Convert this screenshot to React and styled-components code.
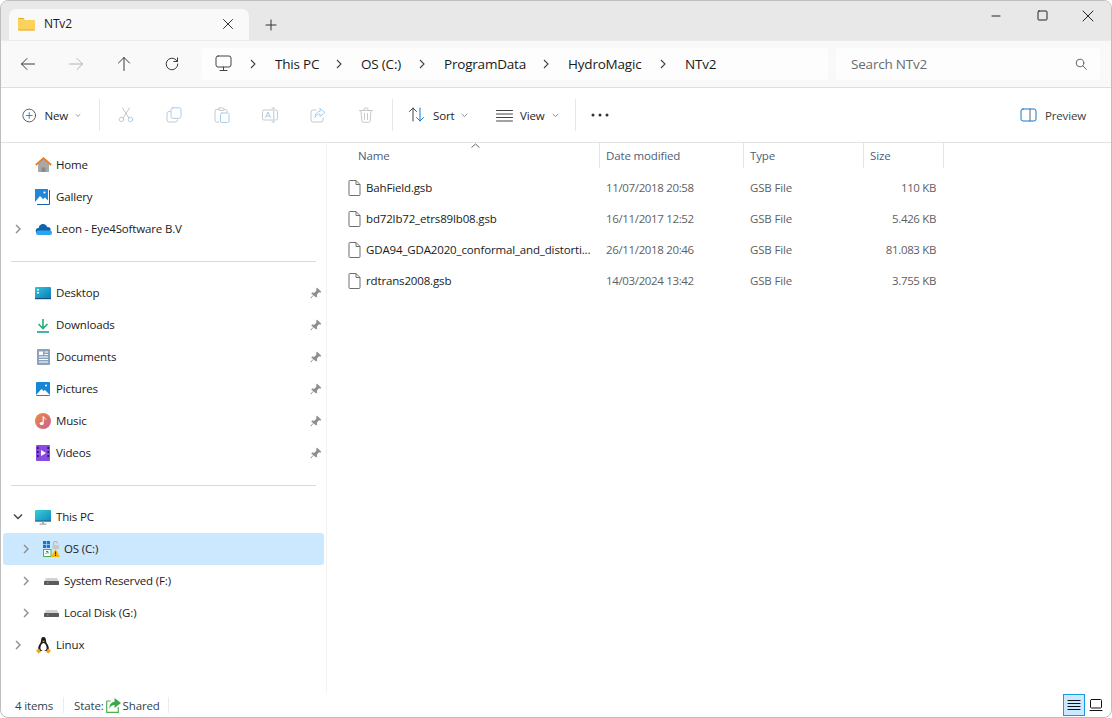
import React from "react";
import styled, { createGlobalStyle } from "styled-components";

const Global = createGlobalStyle`
  html, body { margin: 0; padding: 0; background: #fff; }
  body { font-family: "Open Sans", "Liberation Sans", sans-serif; font-size: 11.5px; color: #1a1a1a; letter-spacing: -0.15px; }
  * { box-sizing: border-box; }
  #root { width: 1112px; height: 718px; }
`;

const Window = styled.div`
  width: 1112px; height: 718px; display: flex; flex-direction: column;
  border: 1px solid #bdbdbd; border-radius: 8px; overflow: hidden; background: #fff;
`;
const TitleBar = styled.div`
  height: 39px; flex: none; background: #e8e8e8; display: flex; align-items: flex-end; padding-left: 8px;
`;
const Tab = styled.div`
  width: 240px; height: 31px; background: #f9f9f9; border-radius: 7px 7px 0 0;
  display: flex; align-items: center; padding: 0 15px 2px 9px; gap: 9px;
`;
const TabTitle = styled.span`flex: 1; font-size: 12px; font-weight: 500;`;
const NewTab = styled.div`width: 44px; height: 31px; display: flex; align-items: center; justify-content: center;`;
const Spacer = styled.div`flex: 1;`;
const WinControls = styled.div`display: flex; align-self: stretch; align-items: flex-start;`;
const WinBtn = styled.div`width: 46px; height: 29px; display: flex; align-items: center; justify-content: center;`;

const AddressRow = styled.div`
  height: 48px; flex: none; background: #f9f9f9; border-bottom: 1px solid #dedede; border-top: 1px solid #ececec;
  display: flex; align-items: center; padding-left: 3px; padding-right: 11px;
`;
const NavBtn = styled.div`width: 48px; height: 32px; display: flex; align-items: center; justify-content: center;`;
const Crumbs = styled.div`
  margin-left: 6px; width: 626px; height: 32px; background: #fdfdfd; border-radius: 4px; padding-bottom: 1px;
  display: flex; align-items: center; padding-left: 13px; font-size: 13.5px; letter-spacing: -0.2px;
`;
const CrumbIcon = styled.div`width: 34px; display: flex; align-items: center;`;
const CrumbChevron = styled.div`width: 26px; display: flex; align-items: center;`;
const CrumbText = styled.div`width: ${p => p.$w}px; white-space: nowrap;`;
const Search = styled.div`
  margin-left: 8px; width: 264px; height: 32px; background: #fdfdfd; border-radius: 4px; padding-bottom: 1px;
  display: flex; align-items: center; padding-left: 15px; padding-right: 13px; font-size: 13.5px; color: #6b6b6b;
  justify-content: space-between; letter-spacing: -0.2px;
`;

const CommandBar = styled.div`
  height: 55px; flex: none; background: #fff; border-bottom: 1px solid #e3e3e3;
  display: flex; align-items: center; padding-left: 4px; padding-right: 25px;
`;
const CmdBtn = styled.div`
  display: flex; align-items: center; height: 32px; width: ${p => p.$w}px; padding-left: ${p => p.$pl || 0}px;
`;
const CmdIconBtn = styled.div`width: 48px; height: 32px; display: flex; align-items: center; justify-content: center;`;
const CmdLabel = styled.span`margin-left: ${p => p.$ml}px; color: #262626;`;
const CmdSep = styled.div`width: 1px; height: 32px; background: #e6e6e6; flex: none; margin: 0 ${p => p.$r || 0}px 0 ${p => p.$l || 0}px;`;
const Caret = styled.svg`margin-left: ${p => p.$ml}px;`;
const PreviewBtn = styled.div`display: flex; align-items: center; gap: 8px; color: #404040; margin-left: auto;`;

const Main = styled.div`flex: 1; display: flex; min-height: 0;`;
const Sidebar = styled.div`
  width: 326px; flex: none; padding: 6px 2px 0 2px; border-right: 1px solid #f2f2f2;
`;
const NavRow = styled.div`
  height: 32px; display: flex; align-items: center; border-radius: 3px; width: 321px;
  background: ${p => (p.$selected ? "#cce8ff" : "transparent")};
  padding-left: ${p => 8 + (p.$indent ? 8 : 0)}px;
`;
const Expander = styled.div`width: 14px; display: flex; justify-content: center; flex: none;`;
const NavIcon = styled.div`width: 18px; height: 18px; margin-left: 9px; display: flex; align-items: center; justify-content: center; flex: none;`;
const NavText = styled.span`margin-left: 4px; flex: 1; white-space: nowrap; padding-bottom: 1px;`;
const Pin = styled.div`width: 12px; margin-right: 2px; display: flex; margin-left: auto;`;
const DividerRow = styled.div`height: 32px; display: flex; align-items: center; padding-left: 8px;`;
const DividerLine = styled.div`width: 305px; height: 1px; background: #d9d9d9;`;

const Content = styled.div`flex: 1; min-width: 0; display: flex; flex-direction: column;`;
const HeaderRow = styled.div`
  height: 25px; display: grid; grid-template-columns: 273px 144px 120px 80px; position: relative;
  margin-bottom: 4px;
`;
const HeaderCell = styled.div`
  border-right: 1px solid #e5e5e5; padding-left: ${p => p.$pl || 6}px; color: #4c607a; display: flex; align-items: center;
`;
const SortCaret = styled.svg`position: absolute; left: 144px; top: 0;`;
const FileRow = styled.div`
  height: 31px; display: grid; grid-template-columns: 273px 144px 120px 72px; align-items: center; color: #5f5f5f;
`;
const NameCell = styled.div`display: flex; align-items: center; padding-left: 21px; gap: 5px; color: #1a1a1a; white-space: nowrap;`;
const Cell = styled.div`padding-left: 6px; white-space: nowrap; letter-spacing: ${p => (p.$tight ? "-0.35px" : "inherit")};`;
const SizeCell = styled.div`text-align: right; white-space: nowrap; letter-spacing: -0.35px;`;

const StatusBar = styled.div`
  height: 24px; flex: none; display: flex; align-items: center; padding-left: 14px; padding-right: 4px; color: #333f4d;
`;
const StatusSep = styled.div`width: 1px; height: 16px; background: #ececec; margin: 0 ${p => p.$r}px 0 ${p => p.$l}px;`;
const StateIcon = styled.div`display: flex; margin: 0 2px 0 2px;`;
const ViewToggle = styled.div`
  width: 22px; height: 22px; display: flex; align-items: center; justify-content: center;
  background: ${p => (p.$active ? "#cce8ff" : "transparent")};
  border: 1px solid ${p => (p.$active ? "#1a9be0" : "transparent")};
`;

const Stroke = ({ size = 16, color = "#3a3a3a", w = 1, children, vb = 16 }) => (
  <svg width={size} height={size} viewBox={`0 0 ${vb} ${vb}`} fill="none" stroke={color} strokeWidth={w} strokeLinecap="round" strokeLinejoin="round">
    {children}
  </svg>
);

const Chevron = ({ color = "#444" }) => (
  <svg width="8" height="10" viewBox="0 0 8 10" fill="none" stroke={color} strokeWidth="1.1"><path d="M2 1l4 4-4 4" /></svg>
);
const ExpandIcon = ({ open }) => open ? (
  <svg width="10" height="8" viewBox="0 0 10 8" fill="none" stroke="#444" strokeWidth="1.4"><path d="M1 1.5l4 4 4-4" /></svg>
) : (
  <svg width="8" height="10" viewBox="0 0 8 10" fill="none" stroke="#8c8c8c" strokeWidth="1.4"><path d="M2 1l4 4-4 4" /></svg>
);
const SmallCaret = ({ ml }) => (
  <Caret $ml={ml} width="7" height="5" viewBox="0 0 7 5" fill="none" stroke="#8a8a8a" strokeWidth="1"><path d="M.8 1l2.7 2.6L6.2 1" /></Caret>
);
const FolderIcon = () => (
  <svg width="17" height="14" viewBox="0 0 17 14">
    <path d="M0 2a1 1 0 011-1h4.5l1.5 1.5h-7z" fill="#e8a820" />
    <path d="M0 3h16a1 1 0 011 1v8.5a1 1 0 01-1 1H1a1 1 0 01-1-1z" fill="#fbd35c" />
    <path d="M0 12.5h17v.2a.8.8 0 01-.8.8H.8a.8.8 0 01-.8-.8z" fill="#e8b030" />
  </svg>
);
const HomeIcon = () => (
  <svg width="17" height="16" viewBox="0 0 17 16">
    <path d="M3 7l5.5-5L14 7v8H3z" fill="#a8a8a8" />
    <path d="M6.5 15v-4.5h4V15z" fill="#8a8a8a" />
    <path d="M.8 8L8.5 1.2 16.2 8" fill="none" stroke="#e8791a" strokeWidth="1.7" />
  </svg>
);
const GalleryIcon = () => (
  <svg width="16" height="16" viewBox="0 0 16 16">
    <rect x="0" y="0" width="13" height="13" fill="#1e88dc" />
    <path d="M0 13l5-6 3 3 2-1.5 3 3V13z" fill="#fff" />
    <circle cx="9.5" cy="3.5" r="1.1" fill="#fff" />
    <path d="M14.5 1v14.5H2" fill="none" stroke="#1d5fa8" strokeWidth="1" />
  </svg>
);
const CloudIcon = () => (
  <svg width="17" height="11" viewBox="0 0 17 11">
    <circle cx="8" cy="4.3" r="4.2" fill="#0f62b0" />
    <circle cx="3.7" cy="7" r="3" fill="#0f62b0" />
    <circle cx="12.8" cy="5.8" r="2.8" fill="#0f62b0" />
    <rect x="1" y="6.5" width="16" height="4.5" rx="2.2" fill="#2aa4ea" />
  </svg>
);
const DesktopIcon = () => (
  <svg width="16" height="13" viewBox="0 0 16 13">
    <defs><linearGradient id="dg" x1="0" y1="0" x2="1" y2="1"><stop offset="0" stopColor="#30c4dc" /><stop offset="1" stopColor="#0f78b8" /></linearGradient></defs>
    <rect width="16" height="12" rx="1" fill="url(#dg)" />
    <rect x="2" y="2" width="2" height="1.5" fill="#fff" /><rect x="2" y="5" width="2" height="1.5" fill="#fff" />
    <rect y="11" width="16" height="1.2" fill="#0c4f80" />
  </svg>
);
const DownloadIcon = () => (
  <svg width="14" height="15" viewBox="0 0 14 15" fill="none" stroke="#1fae7c" strokeWidth="1.6">
    <path d="M7 1v9M2.5 6L7 10.5 11.5 6" /><path d="M1 14h12" stroke="#18a0a0" />
  </svg>
);
const DocsIcon = () => (
  <svg width="13" height="16" viewBox="0 0 13 16">
    <rect width="13" height="16" rx="1" fill="#8aa2bf" />
    <rect x="2" y="2.5" width="4" height="3.5" fill="#fff" /><rect x="7.5" y="2.5" width="3.5" height="1" fill="#fff" /><rect x="7.5" y="5" width="3.5" height="1" fill="#fff" />
    <rect x="2" y="7.5" width="9" height="1" fill="#fff" /><rect x="2" y="10" width="9" height="1" fill="#fff" /><rect x="2" y="12.5" width="9" height="1" fill="#fff" />
  </svg>
);
const PicturesIcon = () => (
  <svg width="14" height="14" viewBox="0 0 14 14">
    <rect width="14" height="14" rx="1" fill="#1586d8" />
    <path d="M0 13l5.5-6 2 2 1.5-1 5 5z" fill="#fff" /><circle cx="10" cy="3.5" r="1" fill="#fff" />
  </svg>
);
const MusicIcon = () => (
  <svg width="16" height="16" viewBox="0 0 16 16">
    <defs><linearGradient id="mg" x1="0" y1="0" x2="1" y2="1"><stop offset="0" stopColor="#f08a3c" /><stop offset="1" stopColor="#c4609a" /></linearGradient></defs>
    <circle cx="8" cy="8" r="8" fill="url(#mg)" />
    <path d="M8.2 3.5v6.2" stroke="#fff" strokeWidth="1.2" /><path d="M8.2 3.5c.4 1.5 2.3 1.6 2.6 3" stroke="#fff" fill="none" strokeWidth="1" />
    <ellipse cx="6.7" cy="10.5" rx="2" ry="1.6" fill="#fff" />
  </svg>
);
const VideosIcon = () => (
  <svg width="14" height="16" viewBox="0 0 14 16">
    <rect width="14" height="16" rx="1" fill="#8a4be0" />
    {[2, 6, 10].map(y => <React.Fragment key={y}><rect x="1" y={y} width="1.6" height="2" fill="#2d1560" /><rect x="11.4" y={y} width="1.6" height="2" fill="#2d1560" /></React.Fragment>)}
    <path d="M5 5l5 3-5 3z" fill="#fff" />
  </svg>
);
const PCIcon = () => (
  <svg width="16" height="15" viewBox="0 0 16 15">
    <defs><linearGradient id="pg" x1="0" y1="0" x2="1" y2="1"><stop offset="0" stopColor="#38cfd8" /><stop offset="1" stopColor="#1088c0" /></linearGradient></defs>
    <rect width="16" height="11.5" rx="1" fill="url(#pg)" />
    <rect y="10.5" width="16" height="1" fill="#2b5f82" />
    <rect x="7" y="11.5" width="2" height="2.2" fill="#9aa6ae" /><rect x="4.5" y="13.5" width="7" height="1.2" fill="#9aa6ae" />
  </svg>
);
const OSDriveIcon = () => (
  <svg width="17" height="16" viewBox="0 0 17 16">
    <rect x="0" y="0" width="3.2" height="3.2" fill="#0f7bd0" /><rect x="3.8" y="0" width="3.2" height="3.2" fill="#0f7bd0" />
    <rect x="0" y="3.8" width="3.2" height="3.2" fill="#0f7bd0" /><rect x="3.8" y="3.8" width="3.2" height="3.2" fill="#0f7bd0" />
    <path d="M10.5 4V2.500a2 2 0 014 0" fill="none" stroke="#b5b5b5" strokeWidth="1.2" /><rect x="9.5" y="4" width="6.5" height="4" fill="#c8c8c8" />
    <rect x=".5" y="8.5" width="7.5" height="7" fill="#fff" stroke="#4caf50" strokeWidth="1" />
    <path d="M2.5 13l1.5-1.500M3 10.500h2v2" stroke="#2e9b3f" strokeWidth="1" fill="none" />
    <path d="M12.5 8l4.500 8H8z" fill="#f5b800" />
    <rect x="12.1" y="10.5" width="1" height="3" fill="#222" /><rect x="12.1" y="14" width="1" height="1" fill="#222" />
  </svg>
);
const DriveIcon = () => (
  <svg width="15" height="7" viewBox="0 0 15 7">
    <path d="M2 0h11l2 3.5H0z" fill="#d2d2d2" />
    <rect y="3" width="15" height="4" rx=".7" fill="#5a5a5a" />
    <rect x="3" y="4.5" width="1.6" height="1" fill="#4de04d" />
  </svg>
);
const PenguinIcon = () => (
  <svg width="15" height="17" viewBox="0 0 15 17">
    <path d="M7.5 0C5.4 0 5 2 5 4c0 1.600-1.600 3-2.500 5.500C2 11 2 13 3 14h9c1-1 1-3 .5-4.500C11.600 7 10 5.600 10 4c0-2-.4-4-2.500-4z" fill="#1d1d1d" />
    <path d="M7.5 6C5.800 6 4.400 9 4.400 11c0 1.600 1 3 3.100 3s3.100-1.400 3.100-3C10.600 9 9.200 6 7.500 6z" fill="#fff" />
    <path d="M6 3.800h3l-1.500 1.400z" fill="#e8a820" />
    <path d="M0 13.500L3 11.500 5 15 2.500 16.500z" fill="#e8a820" /><path d="M15 13.500L12 11.500 10 15 12.500 16.500z" fill="#e8a820" />
  </svg>
);
const PinIcon = () => (
  <svg width="12" height="12" viewBox="0 0 12 12">
    <path d="M7 .5l4.500 4.500-1.200.6-1.300-.3-2 2.200.1 2-1 1L1.200 6.600l1-1 2 .1 2.200-2-.3-1.300z" fill="#8f8f8f" />
    <path d="M3 8.500L.8 11.200" stroke="#8f8f8f" strokeWidth="1" />
  </svg>
);
const FileIcon = () => (
  <svg width="13" height="16" viewBox="0 0 13 16" fill="#fff" stroke="#6e6e6e" strokeWidth="1">
    <path d="M1 1.500a1 1 0 011-1h6l4 4v10a1 1 0 01-1 1H2a1 1 0 01-1-1z" /><path d="M8 .5v4h4" fill="none" />
  </svg>
);
const SharedIcon = () => (
  <svg width="15" height="15" viewBox="0 0 15 15">
    <path d="M.7 3h4M.7 3v11.300h11.600V9" fill="none" stroke="#4caf50" strokeWidth="1.2" />
    <path d="M8.500 0L15 5l-6.500 5V7C6 7 4.500 8 3.300 11c0-4 1.700-7 5.200-7.300z" fill="#3da84a" />
  </svg>
);

const nav = [
  { t: "Home", i: <HomeIcon /> },
  { t: "Gallery", i: <GalleryIcon /> },
  { t: "Leon - Eye4Software B.V", i: <CloudIcon />, e: "closed" },
  { d: true },
  { t: "Desktop", i: <DesktopIcon />, p: true },
  { t: "Downloads", i: <DownloadIcon />, p: true },
  { t: "Documents", i: <DocsIcon />, p: true },
  { t: "Pictures", i: <PicturesIcon />, p: true },
  { t: "Music", i: <MusicIcon />, p: true },
  { t: "Videos", i: <VideosIcon />, p: true },
  { d: true },
  { t: "This PC", i: <PCIcon />, e: "open" },
  { t: "OS (C:)", i: <OSDriveIcon />, e: "closed", indent: true, sel: true },
  { t: "System Reserved (F:)", i: <DriveIcon />, e: "closed", indent: true },
  { t: "Local Disk (G:)", i: <DriveIcon />, e: "closed", indent: true },
  { t: "Linux", i: <PenguinIcon />, e: "closed" },
];

const files = [
  ["BahField.gsb", "11/07/2018 20:58", "110 KB"],
  ["bd72lb72_etrs89lb08.gsb", "16/11/2017 12:52", "5.426 KB"],
  ["GDA94_GDA2020_conformal_and_distorti...", "26/11/2018 20:46", "81.083 KB"],
  ["rdtrans2008.gsb", "14/03/2024 13:42", "3.755 KB"],
];

const crumbs = [["This PC", 60], ["OS (C:)", 57], ["ProgramData", 98], ["HydroMagic", 91], ["NTv2", 40]];

export default function App() {
  return (
    <>
      <Global />
      <Window>
        <TitleBar>
          <Tab>
            <FolderIcon />
            <TabTitle>NTv2</TabTitle>
            <Stroke size={12} vb={12} color="#333"><path d="M1.5 1.5l9 9M10.5 1.5l-9 9" /></Stroke>
          </Tab>
          <NewTab><Stroke size={12} vb={12} color="#333"><path d="M6 1v10M1 6h10" /></Stroke></NewTab>
          <Spacer />
          <WinControls>
            <WinBtn><Stroke size={10} vb={10} color="#222"><path d="M1 5h8" /></Stroke></WinBtn>
            <WinBtn><Stroke size={11} vb={11} color="#222"><rect x="1" y="1" width="9" height="9" rx="1" /></Stroke></WinBtn>
            <WinBtn><Stroke size={12} vb={12} color="#222"><path d="M1 1l10 10M11 1L1 11" /></Stroke></WinBtn>
          </WinControls>
        </TitleBar>
        <AddressRow>
          <NavBtn><Stroke size={16}><path d="M14.5 8H1.5M7 2.5L1.5 8 7 13.5" /></Stroke></NavBtn>
          <NavBtn><Stroke size={16} color="#b4b4b4"><path d="M1.5 8h13M9 2.5L14.5 8 9 13.5" /></Stroke></NavBtn>
          <NavBtn><Stroke size={16}><path d="M8 14.5V1.5M2.5 7L8 1.5 13.5 7" /></Stroke></NavBtn>
          <NavBtn><Stroke size={16}><path d="M13.8 8a5.8 5.8 0 11-1.7-4.1L13.5 5.500M13.500 1.800v3.700H9.800" /></Stroke></NavBtn>
          <Crumbs>
            <CrumbIcon>
              <Stroke size={17} vb={17} color="#444"><rect x="1" y="1" width="15" height="11" rx="2" /><path d="M8.5 12v3M5 15.500h7" /></Stroke>
            </CrumbIcon>
            {crumbs.map(([t, w]) => (
              <React.Fragment key={t}>
                <CrumbChevron><Chevron /></CrumbChevron>
                <CrumbText $w={w}>{t}</CrumbText>
              </React.Fragment>
            ))}
          </Crumbs>
          <Search>
            Search NTv2
            <Stroke size={12} vb={12} color="#666"><circle cx="5" cy="5" r="3.8" /><path d="M7.8 7.8l3.500 3.500" /></Stroke>
          </Search>
        </AddressRow>
        <CommandBar>
          <CmdBtn $w={76} $pl={17}>
            <Stroke size={17} vb={17} color="#444"><circle cx="8.5" cy="8.5" r="7.5" /><path d="M8.5 5v7M5 8.500h7" stroke="#0f7bd0" /></Stroke>
            <CmdLabel $ml={8}>New</CmdLabel>
            <SmallCaret ml={7} />
          </CmdBtn>
          <CmdSep $l={18} $r={2} />
          <CmdIconBtn>
            <Stroke size={16} color="#a9cdea"><circle cx="3.5" cy="12.5" r="2.2" /><circle cx="12.5" cy="12.5" r="2.2" /><path d="M4.5 1l6.500 10M11.500 1L5 11" stroke="#c4c4c4" /></Stroke>
          </CmdIconBtn>
          <CmdIconBtn>
            <Stroke size={16} color="#c8c8c8"><path d="M4 4.500H3a2 2 0 00-2 2V13a2 2 0 002 2h6.500a2 2 0 002-2" /><rect x="5" y=".8" width="10" height="10.5" rx="2" stroke="#a9cdea" /></Stroke>
          </CmdIconBtn>
          <CmdIconBtn>
            <Stroke size={16} color="#c8c8c8"><path d="M5 2.500H2.500a1.500 1.500 0 00-1.500 1.500v9.500a1.500 1.500 0 001.500 1.500H5M10 2.500h1.500A1.500 1.500 0 0113 4v1.500" /><rect x="4.5" y="1" width="5.5" height="2.5" rx="1" /><rect x="6.5" y="6" width="8.5" height="9.5" rx="1.5" stroke="#a9cdea" /></Stroke>
          </CmdIconBtn>
          <CmdIconBtn>
            <Stroke size={16} color="#c8c8c8"><path d="M10.500 3H2a1.500 1.500 0 00-1.500 1.500v7A1.500 1.500 0 002 13h8.500M13 3h1a1.500 1.500 0 011.500 1.500v7A1.500 1.500 0 0114 13h-1" /><path d="M10 1h1.800M10 15h1.800M11.800 1v14" stroke="#a9cdea" /><path d="M3.500 10.500L6 5l2.500 5.500M4.500 9h3" stroke="#a9cdea" /></Stroke>
          </CmdIconBtn>
          <CmdIconBtn>
            <Stroke size={16} color="#c8c8c8"><path d="M6 3H3a2 2 0 00-2 2v8a2 2 0 002 2h8a2 2 0 002-2v-2" /><path d="M10 1.500l5 4-5 4V7C7.500 7 6 8 5 10.500 5 7 7 4.500 10 4.200z" stroke="#a9cdea" /></Stroke>
          </CmdIconBtn>
          <CmdIconBtn>
            <Stroke size={16} color="#c8c8c8"><path d="M1.500 3.500h13M6 3.500V2a1 1 0 011-1h2a1 1 0 011 1v1.500M3 3.500l.8 10.500a1.500 1.500 0 001.500 1.300h5.400a1.500 1.500 0 001.500-1.300L13 3.500M6.500 6.500v6M9.500 6.500v6" /></Stroke>
          </CmdIconBtn>
          <CmdSep $r={9} $l={2} />
          <CmdBtn $w={87} $pl={6}>
            <Stroke size={18} vb={18} color="#444"><path d="M5 15V2M1.500 5.500L5 2l3.500 3.500" /><path d="M12 2v13M8.500 11.500L12 15l3.500-3.500" stroke="#0f7bd0" /></Stroke>
            <CmdLabel $ml={7}>Sort</CmdLabel>
            <SmallCaret ml={7} />
          </CmdBtn>
          <CmdBtn $w={86} $pl={7}>
            <Stroke size={17} vb={17} color="#444"><path d="M.5 3.500h16M.5 7h16M.5 10.500h16M.5 14h16" /></Stroke>
            <CmdLabel $ml={7}>View</CmdLabel>
            <SmallCaret ml={7} />
          </CmdBtn>
          <CmdSep $r={15} />
          <svg width="18" height="4" viewBox="0 0 18 4" fill="#333"><circle cx="2" cy="2" r="1.5" /><circle cx="9" cy="2" r="1.5" /><circle cx="16" cy="2" r="1.5" /></svg>
          <PreviewBtn>
            <Stroke size={17} vb={17} color="#0f7bd0"><rect x="1" y="2" width="15" height="12" rx="2" /><path d="M10 2v12" stroke="#666" /></Stroke>
            Preview
          </PreviewBtn>
        </CommandBar>
        <Main>
          <Sidebar>
            {nav.map((n, i) =>
              n.d ? (
                <DividerRow key={i}><DividerLine /></DividerRow>
              ) : (
                <NavRow key={n.t} $selected={n.sel} $indent={n.indent}>
                  <Expander>{n.e && <ExpandIcon open={n.e === "open"} />}</Expander>
                  <NavIcon>{n.i}</NavIcon>
                  <NavText>{n.t}</NavText>
                  {n.p && <Pin><PinIcon /></Pin>}
                </NavRow>
              )
            )}
          </Sidebar>
          <Content>
            <HeaderRow>
              <SortCaret width="9" height="5" viewBox="0 0 9 5" fill="none" stroke="#666" strokeWidth="1"><path d="M.5 4.500l4-3.500 4 3.500" /></SortCaret>
              <HeaderCell $pl={31}>Name</HeaderCell>
              <HeaderCell>Date modified</HeaderCell>
              <HeaderCell>Type</HeaderCell>
              <HeaderCell>Size</HeaderCell>
            </HeaderRow>
            {files.map(f => (
              <FileRow key={f[0]}>
                <NameCell><FileIcon />{f[0]}</NameCell>
                <Cell $tight>{f[1]}</Cell>
                <Cell>GSB File</Cell>
                <SizeCell>{f[2]}</SizeCell>
              </FileRow>
            ))}
          </Content>
        </Main>
        <StatusBar>
          4 items
          <StatusSep $l={10} $r={10} />
          State:
          <StateIcon><SharedIcon /></StateIcon>
          Shared
          <StatusSep $l={8} $r={0} />
          <Spacer />
          <ViewToggle $active><Stroke size={14} vb={14} color="#111"><path d="M1 2.500h12M1 5.500h12M1 8.500h12M1 11.500h12" /></Stroke></ViewToggle>
          <ViewToggle><Stroke size={14} vb={14} color="#111"><rect x="1.5" y="1.5" width="11" height="8.5" rx="1" /><path d="M1 12.500h12" /></Stroke></ViewToggle>
        </StatusBar>
      </Window>
    </>
  );
}
